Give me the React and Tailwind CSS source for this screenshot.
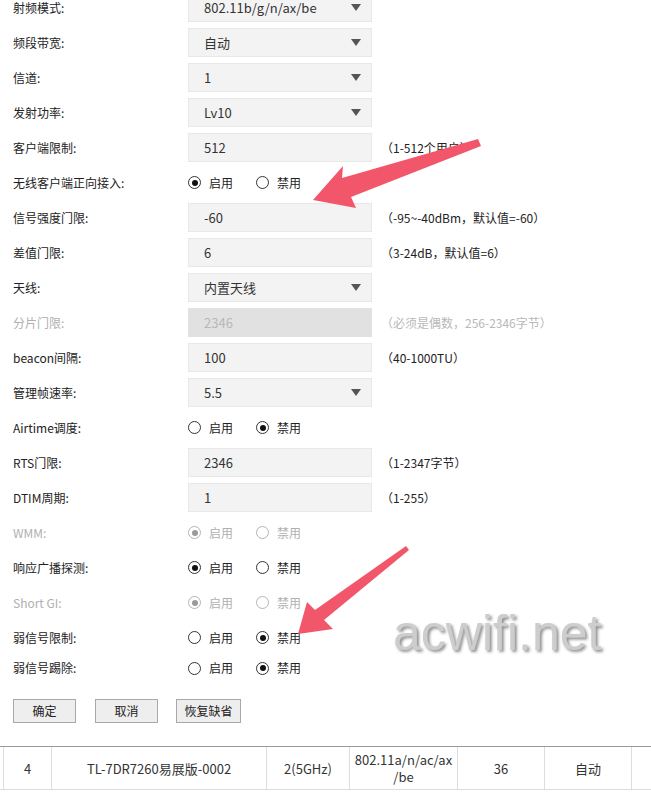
import React from 'react';

const FONT = { fontFamily: '"Noto Sans CJK SC", "Noto Sans", sans-serif' };

const ROWS = [
  { label: '射频模式:', type: 'select', value: '802.11b/g/n/ax/be' },
  { label: '频段带宽:', type: 'select', value: '自动' },
  { label: '信道:', type: 'select', value: '1' },
  { label: '发射功率:', type: 'select', value: 'Lv10' },
  { label: '客户端限制:', type: 'input', value: '512', hint: '（1-512个用户）' },
  { label: '无线客户端正向接入:', type: 'radio', on: true },
  { label: '信号强度门限:', type: 'input', value: '-60', hint: '（-95~-40dBm，默认值=-60）' },
  { label: '差值门限:', type: 'input', value: '6', hint: '（3-24dB，默认值=6）' },
  { label: '天线:', type: 'select', value: '内置天线' },
  { label: '分片门限:', type: 'input', value: '2346', hint: '（必须是偶数，256-2346字节）', disabled: true },
  { label: 'beacon间隔:', type: 'input', value: '100', hint: '（40-1000TU）' },
  { label: '管理帧速率:', type: 'select', value: '5.5' },
  { label: 'Airtime调度:', type: 'radio', on: false },
  { label: 'RTS门限:', type: 'input', value: '2346', hint: '（1-2347字节）' },
  { label: 'DTIM周期:', type: 'input', value: '1', hint: '（1-255）' },
  { label: 'WMM:', type: 'radio', on: true, disabled: true },
  { label: '响应广播探测:', type: 'radio', on: true },
  { label: 'Short GI:', type: 'radio', on: true, disabled: true },
  { label: '弱信号限制:', type: 'radio', on: false },
  { label: '弱信号踢除:', type: 'radio', on: false, last: true },
];

function Radio({ checked, disabled }) {
  const c = disabled ? 'border-[#b5b5b5]' : 'border-[#333]';
  const d = disabled ? 'bg-[#9a9a9a]' : 'bg-[#111]';
  return (
    <span className={`w-[13px] h-[13px] rounded-full border ${c} bg-white flex items-center justify-center`}>
      {checked && <span className={`w-[6px] h-[6px] rounded-full ${d}`} />}
    </span>
  );
}

function Control({ row }) {
  if (row.type === 'radio') {
    const txt = row.disabled ? 'text-[#b0b0b0]' : 'text-[#222]';
    return (
      <div className={`flex items-center text-[12px] ${txt}`}>
        <Radio checked={row.on} disabled={row.disabled} />
        <span className="ml-[8px] w-[47px]">启用</span>
        <Radio checked={!row.on} disabled={row.disabled} />
        <span className="ml-[8px]">禁用</span>
      </div>
    );
  }
  return (
    <div className="flex items-center">
      <div
        className={`w-[184px] h-[29px] border flex items-center justify-between pl-[15px] pr-[10px] text-[13px] ${
          row.disabled
            ? 'bg-[#e1e1e1] border-[#e1e1e1] text-[#b8b8b8]'
            : 'bg-[#f3f3f3] border-[#e8e8e8] text-[#333]'
        }`}
      >
        <span>{row.value}</span>
        {row.type === 'select' && (
          <svg width="10" height="7" viewBox="0 0 10 7">
            <polygon points="0,0 10,0 5,7" fill="#555" />
          </svg>
        )}
      </div>
      {row.hint && (
        <span className={`ml-[9px] text-[12px] -ml-[2px] ${row.disabled ? 'text-[#b8b8b8]' : 'text-[#222]'}`}>
          {row.hint}
        </span>
      )}
    </div>
  );
}

function Arrows() {
  return (
    <svg className="absolute left-0 top-0 pointer-events-none" width="651" height="793">
      <polygon
        points="313,200 343,166 342,178 478,139 481,146 351,197 356,208"
        fill="#f2566b"
      />
      <polygon
        points="298,634 307,602 315,610 406,546 409,550 324,620 333,629"
        fill="#f2566b"
      />
    </svg>
  );
}

export default function App() {
  const cols = [
    { w: 'w-[48px]', t: '4' },
    { w: 'w-[215px]', t: 'TL-7DR7260易展版-0002' },
    { w: 'w-[83px]', t: '2(5GHz)' },
    { w: 'w-[108px]', t: '802.11a/n/ac/ax\n/be' },
    { w: 'w-[87px]', t: '36' },
    { w: 'w-[87px]', t: '自动' },
  ];

  return (
    <div className="relative w-[651px] h-[793px] overflow-hidden bg-white" style={FONT}>
      <div className="-mt-[10px]">
        {ROWS.map((row) => (
          <div key={row.label} className={`flex items-center ${row.last ? 'h-[26px]' : 'h-[35px]'}`}>
            <div className={`w-[188px] pl-[13px] text-[12px] ${row.disabled ? 'text-[#b0b0b0]' : 'text-[#222]'}`}>
              {row.label}
            </div>
            <Control row={row} />
          </div>
        ))}
      </div>

      <div className="flex gap-[19px] pl-[13px] mt-[18px] text-[12px] text-[#222]">
        <button className="w-[63px] h-[24px] bg-[#eeeeee] border border-[#a8a8a8]">确定</button>
        <button className="w-[63px] h-[24px] bg-[#eeeeee] border border-[#a8a8a8]">取消</button>
        <button className="w-[65px] h-[24px] bg-[#eeeeee] border border-[#a8a8a8] -ml-[1px]">恢复缺省</button>
      </div>

      <div className="mt-[23px] flex border-t border-t-[#999] border-b border-b-[#ddd] h-[44px] text-[13px] text-[#333] w-[700px]">
        <div className="w-[4px] border-r border-[#ddd]" />
        {cols.map((c) => (
          <div
            key={c.t}
            className={`${c.w} border-r border-[#ddd] flex items-center justify-center text-center whitespace-pre leading-[17px]`}
          >
            {c.t}
          </div>
        ))}
      </div>

      <Arrows />

      <div
        className="absolute left-[393px] top-[596px] text-[50px] text-[#cdcdcd] [text-shadow:2px_2px_3px_#8f8f8f]"
        style={{ fontFamily: '"Liberation Sans", Arial, sans-serif' }}
      >
        acwifi.net
      </div>
    </div>
  );
}
